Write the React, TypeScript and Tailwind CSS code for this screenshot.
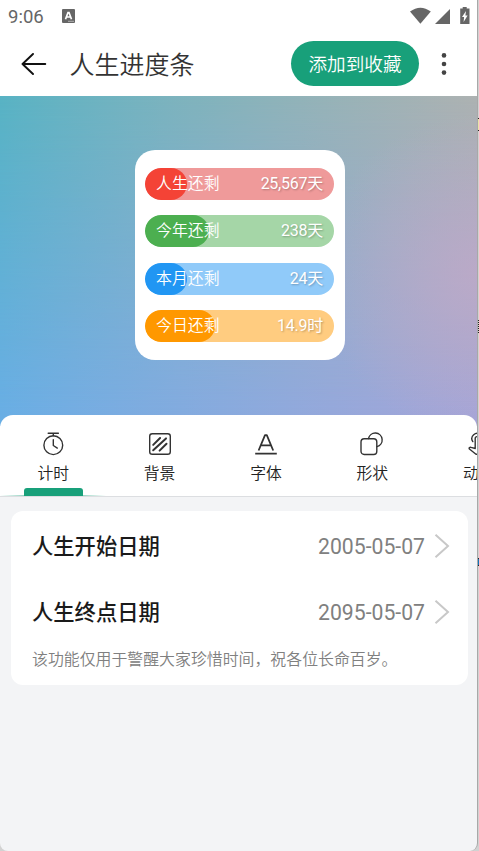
const bars = [
  { label: '人生还剩', value: '25,567天', track: 'bg-[#ef9a9a]', fill: 'bg-[#f44336] w-[42px]' },
  { label: '今年还剩', value: '238天', track: 'bg-[#a5d6a7]', fill: 'bg-[#4caf50] w-[64px]' },
  { label: '本月还剩', value: '24天', track: 'bg-[#90caf9]', fill: 'bg-[#2196f3] w-[42px]' },
  { label: '今日还剩', value: '14.9时', track: 'bg-[#ffcc80]', fill: 'bg-[#ff9800] w-[70px]' },
]

const iconProps = {
  width: 24,
  height: 24,
  viewBox: '0 0 24 24',
  fill: 'none',
  stroke: '#333333',
  strokeWidth: 1.4,
  strokeLinecap: 'round' as const,
  strokeLinejoin: 'round' as const,
}

function TimerIcon() {
  return (
    <svg {...iconProps}>
      <circle cx="12.3" cy="13.2" r="9.4" />
      <path d="M7.2 1.2h10.2M12.3 1.2v2.6M12.3 7.6v5.9l4 2.6" />
    </svg>
  )
}

function BackgroundIcon() {
  return (
    <svg {...iconProps}>
      <rect x="1.7" y="1.7" width="20.6" height="20.6" rx="2.6" />
      <path d="M5.2 12.9l6.9-6.9M5.2 18.2L18 6.4M11.6 18.6l6.9-6.9" strokeWidth="2" />
    </svg>
  )
}

function FontIcon() {
  return (
    <svg {...iconProps}>
      <path d="M4.6 18.5L11 3.2h1.8l6.4 15.3M7.2 13.4h9.4" strokeWidth="1.8" strokeLinecap="butt" />
      <path d="M1.2 21.6h21.6" strokeWidth="1.8" strokeLinecap="butt" />
    </svg>
  )
}

function ShapeIcon() {
  return (
    <svg {...iconProps}>
      <rect x="1" y="6.7" width="15.8" height="15.8" rx="3.2" />
      <path d="M8.5 6.5a6.9 6.9 0 1 1 8.5 8.1" />
    </svg>
  )
}

function MotionIcon() {
  return (
    <svg {...iconProps}>
      <path d="M5.8 9.6a5.2 5.2 0 1 1 8.6 0" />
      <path d="M8.2 16.5V6.4a1.8 1.8 0 0 1 3.6 0v5.8l6.5 1.6c1.4.4 2 1.3 1.8 2.7l-.8 5.8H9L2.4 17c-.8-1.1.7-2.1 1.7-1.6z" />
    </svg>
  )
}

const tabs = [
  { label: '计时', icon: TimerIcon },
  { label: '背景', icon: BackgroundIcon },
  { label: '字体', icon: FontIcon },
  { label: '形状', icon: ShapeIcon },
  { label: '动画', icon: MotionIcon },
]

const dates = [
  { label: '人生开始日期', value: '2005-05-07' },
  { label: '人生终点日期', value: '2095-05-07' },
]

function StatusBar() {
  return (
    <div className="flex h-8 items-center pl-2 pr-[7px] text-[#666666]">
      <span className="pt-[2px] text-[18.5px] leading-none">9:06</span>
      <svg className="ml-[18px]" width="13" height="14" viewBox="0 0 13 14">
        <rect width="13" height="14" rx="1" fill="currentColor" />
        <path d="M3.5 10.2L6 3.5h1l2.5 6.7M4.5 8h4" fill="none" stroke="white" strokeWidth="1.7" />
        <path d="M6.5 12.3h1M8.5 12.3h1M10.5 12.3h1" stroke="white" />
      </svg>
      <svg className="ml-auto" width="60" height="20" viewBox="0 0 60 20" fill="currentColor">
        <path d="M0 5.6Q10.4-2.2 20.8 5.6L10.4 17.8z" />
        <path d="M40 3v15H25z" />
        <path d="M50.2 2.6h2.5V1h4v1.6h2.8V18h-9.3z" />
        <path d="M56 5l-4 6h2.1l-.5 5 4-6.5h-2.2z" fill="white" />
      </svg>
    </div>
  )
}

function Header() {
  return (
    <header className="flex h-16 items-center pl-[21px] pr-[30px]">
      <svg width="26" height="22" viewBox="0 0 26 22" fill="none" stroke="#111111" strokeWidth="1.9" strokeLinecap="round" strokeLinejoin="round">
        <path d="M24.3 11H1.5M12 1L1.5 11 12 21" />
      </svg>
      <h1 className="ml-[22.5px] pt-[2px] text-[25px] font-[350] leading-none text-[#333333]">人生进度条</h1>
      <button className="mb-px ml-auto h-[45px] w-32 rounded-full bg-[#18a07a] pt-[4px] text-[18.6px] font-[350] text-white">
        添加到收藏
      </button>
      <svg className="ml-[22px]" width="6" height="22" viewBox="0 0 6 22" fill="#444444">
        <circle cx="3" cy="2.4" r="2.3" />
        <circle cx="3" cy="11" r="2.3" />
        <circle cx="3" cy="19.6" r="2.3" />
      </svg>
    </header>
  )
}

function Preview() {
  return (
    <section className="relative flex h-[330px] justify-center bg-linear-to-r from-[#58b3c4] to-[#adb2b2] pl-[2px] pt-[54px]">
      <div className="absolute inset-0 bg-linear-to-r from-[#69aee4] to-[#a5a5d7] mask-[linear-gradient(to_bottom,transparent,black_96%)]" />
      <div className="absolute inset-0 bg-[radial-gradient(circle_at_100%_54%,rgba(194,169,200,0.7),rgba(192,168,200,0)_160px)]" />
      <div className="relative flex h-[210px] w-[210px] flex-col gap-[15.3px] rounded-[20px] bg-white px-[10.5px] pt-[18px]">
        {bars.map((b) => (
          <div key={b.label} className={`relative flex h-8 shrink-0 items-center justify-between overflow-hidden rounded-full px-[11px] text-[15.9px] text-white ${b.track}`}>
            <div className={`absolute inset-y-0 left-0 rounded-full ${b.fill}`} />
            <span className="relative font-[350]">{b.label}</span>
            <span className="relative text-[16px] tracking-[-0.25px] [text-shadow:1px_1px_2px_rgba(0,0,0,0.25)]">{b.value}</span>
          </div>
        ))}
      </div>
    </section>
  )
}

function Tabs() {
  return (
    <nav className="relative -mt-[11px] flex h-[82px] overflow-hidden rounded-t-[13px] border-b border-[#dcdee1] bg-white">
      {tabs.map(({ label, icon: Icon }, i) => (
        <div key={label} className="relative flex w-[106.4px] shrink-0 flex-col items-center pt-[17px]">
          <Icon />
          <span className="mt-[6px] text-[15.8px] font-[350] leading-6 text-[#222222]">{label}</span>
          {i === 0 && (
            <>
              <div className="absolute bottom-0 left-0 h-px w-full bg-linear-to-r from-transparent via-[#18a07a] to-transparent" />
              <div className="absolute bottom-0 left-6 h-2 w-[58.5px] rounded-t-[3px] bg-[#18a07a]" />
            </>
          )}
        </div>
      ))}
    </nav>
  )
}

function Settings() {
  return (
    <main className="mt-3.5 ml-[10.5px] mr-[9px] h-[174px] rounded-xl bg-white pl-[21.5px] pr-[18px] pt-[3px]">
      {dates.map((d) => (
        <div key={d.label} className="flex h-[66px] items-center text-[21.3px]">
          <span className="pb-px font-medium text-[#1a1a1a]">{d.label}</span>
          <span className="ml-auto text-[21.2px] text-[#808080]">{d.value}</span>
          <svg className="mb-[2px] ml-[9px]" width="16" height="24" viewBox="0 0 16 24" fill="none" stroke="#c8c8c8" strokeWidth="2">
            <path d="M1.5.8L14 12 1.5 23.2" />
          </svg>
        </div>
      ))}
      <p className="text-[15.9px] font-[350] leading-7 text-[#808080]">该功能仅用于警醒大家珍惜时间，祝各位长命百岁。</p>
    </main>
  )
}

export default function App() {
  return (
    <div className="flex h-[851px] w-[479px] overflow-hidden bg-[#d2d2d2] font-[Roboto,'Noto_Sans_CJK_SC',sans-serif]">
      <div className="h-full w-[478px] shrink-0 overflow-hidden rounded-b-lg border-r border-[#a8a8a8] bg-[#f3f4f6]">
        <div className="bg-white">
          <StatusBar />
          <Header />
        </div>
        <Preview />
        <Tabs />
        <Settings />
      </div>
      <div className="w-px pt-[118px]">
        <div className="h-[13px] border-y border-[#222222] bg-[#e8e4a8]" />
        <div className="mt-[189px] h-[13px] bg-[repeating-linear-gradient(#222222_0_1px,#d2d2d2_1px_2px)]" />
        <div className="mt-[225px] h-[8px] border-y border-[#222222] bg-[#1273b8]" />
      </div>
    </div>
  )
}
